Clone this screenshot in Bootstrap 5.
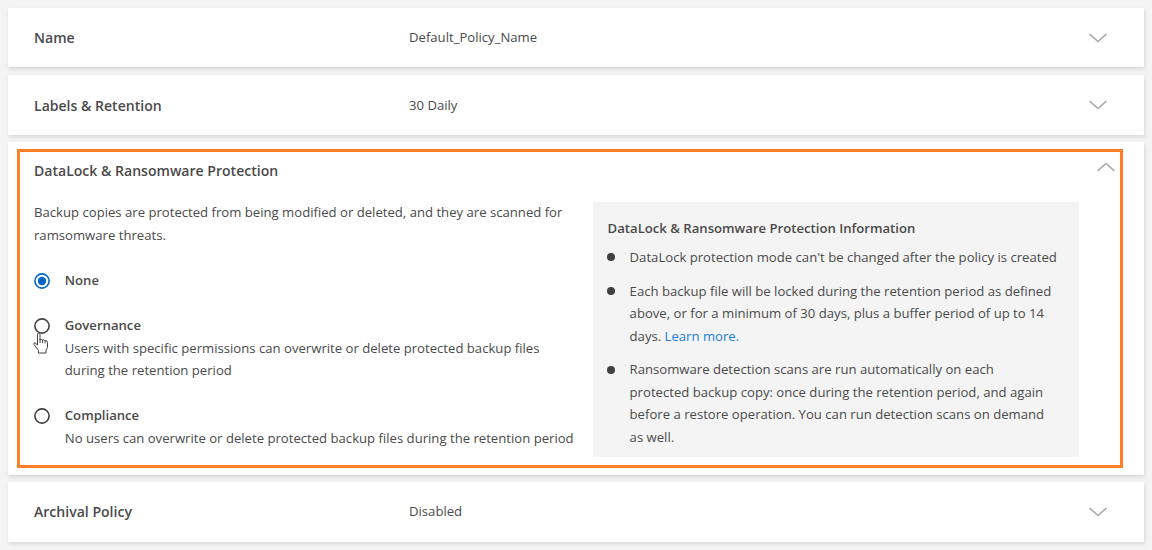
<!DOCTYPE html>
<html lang="en">
<head>
<meta charset="utf-8">
<meta name="viewport" content="width=device-width, initial-scale=1">
<title>Backup policy</title>
<link href="https://cdn.jsdelivr.net/npm/bootstrap@5.3.0/dist/css/bootstrap.min.css" rel="stylesheet">
<style>
  body { background: #f4f4f4; color: #4a4a4a; font-family: "Open Sans", sans-serif; font-size: 13.13px; line-height: 22.4px; overflow: hidden; }
  .policy-list { padding: 8px 8.5px 0 8px; }
  .policy-card { background: #fff; box-shadow: 1px 2px 4px rgba(0,0,0,.12); margin-bottom: 7.6px; }
  .policy-row { height: 59.4px; padding: 0 37px 0 26px; }
  .policy-row.tall { height: 60px; }
  .policy-row .policy-title { padding-top: 1px; }
  .tall .policy-title { padding-top: 1.6px; }
  .policy-title { width: 375px; font-size: 14.05px; font-weight: 600; }
  .policy-value { padding-bottom: .6px; }
  .tall .policy-value { padding: .6px 0 0; }
  .chev { width: 18px; height: 10px; fill: none; stroke: #aaa; stroke-width: 1.6; display: block; }
  .open-card { height: 332.7px; padding: 7px 20.5px 7px 9px; margin: -.3px 0 7.2px; }
  .highlight { border: 3px solid #ff7f27; padding: 0 5px 0 14px; }
  .open-head { height: 49.2px; padding-top: 8px; }
  .open-head .chev { margin-top: 2px; }
  .left-col { width: 558.6px; }
  .choices { margin-top: 22.8px; }
  .choice { gap: 14.8px; }
  .choice + .choice { margin-top: 22.7px; }
  .choice:last-child div { padding-top: .1px; }
  .choice strong, .info-title { font-weight: 600; }
  .dial { width: 16px; height: 16px; margin-top: 3.8px; fill: #fff; stroke: #404040; stroke-width: 1.6; display: block; }
  .dial-on { stroke: #0067c5; }
  .info-box { background: #f4f4f4; width: 486.5px; height: 255px; margin-top: .8px; padding: 14.3px 10px 0 15px; }
  .info-title { margin-bottom: 7.2px; }
  .points > li { position: relative; padding-left: 22px; margin-bottom: 11.3px; }
  .points > li::before { content: ""; position: absolute; left: -.3px; top: 7.3px; width: 8px; height: 8px; border-radius: 50%; background: #404040; }
  .more { color: #1b7dd4; text-decoration: none; }
  .hand { position: absolute; left: -1px; top: 18px; width: 16px; height: 22px; }
</style>
</head>
<body>
<main class="policy-list text-nowrap">
  <section class="policy-card policy-row d-flex align-items-center">
    <div class="policy-title">Name</div><div class="policy-value">Default_Policy_Name</div>
    <svg class="chev ms-auto" viewBox="0 0 18 10"><path d="M.7 1.200 9 8.500l8.300-7.300"/></svg>
  </section>
  <section class="policy-card policy-row tall d-flex align-items-center">
    <div class="policy-title">Labels &amp; Retention</div><div class="policy-value">30 Daily</div>
    <svg class="chev ms-auto" viewBox="0 0 18 10"><path d="M.7 1.200 9 8.500l8.300-7.300"/></svg>
  </section>
  <section class="policy-card open-card">
    <div class="highlight h-100">
      <div class="open-head d-flex justify-content-between">
        <div class="policy-title">DataLock &amp; Ransomware Protection</div>
        <svg class="chev" viewBox="0 0 18 10"><path d="M.7 8.800 9 1.500l8.300 7.300"/></svg>
      </div>
      <div class="d-flex">
        <div class="left-col flex-shrink-0">
          <p class="mb-0">Backup copies are protected from being modified or deleted, and they are scanned for<br>ramsomware threats.</p>
          <div class="choices">
            <div class="choice d-flex">
              <svg class="dial dial-on flex-shrink-0" viewBox="0 0 16 16"><circle cx="8" cy="8" r="7.100"/><circle cx="8" cy="8" r="4.200" fill="#0067c5" stroke="none"/></svg>
              <strong>None</strong>
            </div>
            <div class="choice d-flex">
              <div class="position-relative flex-shrink-0">
                <svg class="dial" viewBox="0 0 16 16"><circle cx="8" cy="8" r="7.100"/></svg>
                <svg class="hand" viewBox="0 0 16 22"><path d="M4.500 13V2.500Q4.500 1 5.700 1T7 2.500V8Q8.300 6.700 9.400 8q1.500-.8 2.500.6 2.600-.3 2.600 2v5L13 18v3H5.500v-2.500L1 12.500q-.5-1.800 1-1.800Z" fill="#fff" stroke="#404040"/><path d="M7 7.500V11M9.500 8v3M12 9v2.500" stroke="#404040"/></svg>
              </div>
              <div><strong>Governance</strong><br>Users with specific permissions can overwrite or delete protected backup files<br>during the retention period</div>
            </div>
            <div class="choice d-flex">
              <svg class="dial flex-shrink-0" viewBox="0 0 16 16"><circle cx="8" cy="8" r="7.100"/></svg>
              <div><strong>Compliance</strong><br>No users can overwrite or delete protected backup files during the retention period</div>
            </div>
          </div>
        </div>
        <aside class="info-box flex-shrink-0">
          <div class="info-title">DataLock &amp; Ransomware Protection Information</div>
          <ul class="points list-unstyled mb-0">
            <li>DataLock protection mode can't be changed after the policy is created</li>
            <li>Each backup file will be locked during the retention period as defined<br>above, or for a minimum of 30 days, plus a buffer period of up to 14<br>days. <a class="more" href="#">Learn more.</a></li>
            <li>Ransomware detection scans are run automatically on each<br>protected backup copy: once during the retention period, and again<br>before a restore operation. You can run detection scans on demand<br>as well.</li>
          </ul>
        </aside>
      </div>
    </div>
  </section>
  <section class="policy-card policy-row d-flex align-items-center">
    <div class="policy-title">Archival Policy</div><div class="policy-value">Disabled</div>
    <svg class="chev ms-auto" viewBox="0 0 18 10"><path d="M.7 1.200 9 8.500l8.300-7.300"/></svg>
  </section>
</main>
<script src="https://cdn.jsdelivr.net/npm/bootstrap@5.3.0/dist/js/bootstrap.bundle.min.js"></script>
</body>
</html>
